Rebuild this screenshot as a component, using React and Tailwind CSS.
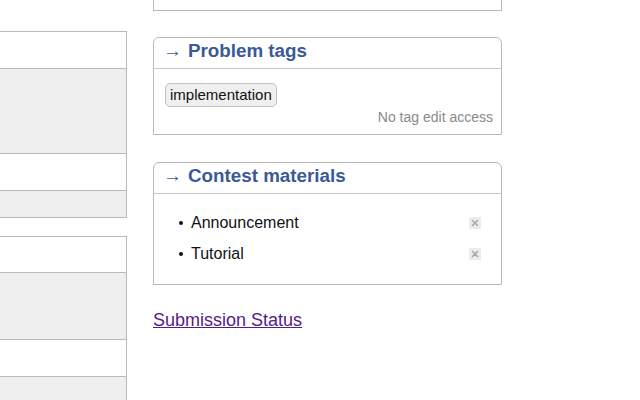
const tableRows = [
  { h: "h-[36px]", bg: "bg-white" },
  { h: "h-[85px]", bg: "bg-[#efefef]" },
  { h: "h-[37px]", bg: "bg-white" },
  { h: "h-[27px]", bg: "bg-[#efefef]" },
];

const tableRows2 = [
  { h: "h-[35px]", bg: "bg-white" },
  { h: "h-[67px]", bg: "bg-[#efefef]" },
  { h: "h-[37px]", bg: "bg-white" },
  { h: "h-[40px]", bg: "bg-[#efefef]" },
];

const Table = ({ rows }) => (
  <div className="border-t border-r border-b border-[#b9b9b9]">
    {rows.map((r, i) => (
      <div key={i} className={`${r.h} ${r.bg} ${i > 0 ? "border-t border-[#b9b9b9]" : ""}`} />
    ))}
  </div>
);

const BoxTitle = ({ children }) => (
  <div className="h-[31px] border-b border-[#c8c8c8] pl-[9px] pb-[4px] flex items-center">
    <span className="flex items-baseline">
      <span className="w-[25px] shrink-0 text-[#3b5998] text-[19px] leading-none">→</span>
      <span className="text-[#3b5998] text-[18.8px] font-bold leading-none">{children}</span>
    </span>
  </div>
);

const CloseIcon = () => (
  <span className="w-[12px] h-[12px] bg-[#ececec] flex items-center justify-center">
    <svg width="8" height="8" viewBox="0 0 8 8">
      <path d="M1 1L7 7M7 1L1 7" stroke="#a8a8a8" strokeWidth="1.5" />
    </svg>
  </span>
);

const App = () => {
  return (
    <div className="w-[640px] h-[400px] overflow-hidden bg-white flex font-['Liberation_Sans',Arial,sans-serif]">
      <div className="w-[127px] shrink-0 pt-[31px]">
        <Table rows={tableRows} />
        <div className="h-[18px]" />
        <Table rows={tableRows2} />
      </div>

      <div className="w-[349px] ml-[26px] shrink-0">
        <div className="h-[11px] border-x border-b border-[#b9b9b9]" />

        <div className="mt-[26px] h-[98px] border border-[#b9b9b9] rounded-t-[6px]">
          <BoxTitle>Problem tags</BoxTitle>
          <div className="px-[11px] pt-[14px]">
            <span className="inline-block h-[24px] leading-[21px] px-[4px] bg-[#efefef] border border-[#c2c2c2] rounded-[5px] text-[15px] text-[#111]">
              implementation
            </span>
            <div className="text-right text-[14px] text-[#8a8a8a] -mr-[3px] mt-[2px] leading-[16px]">No tag edit access</div>
          </div>
        </div>

        <div className="mt-[27px] h-[123px] border border-[#b9b9b9] rounded-t-[6px]">
          <BoxTitle>Contest materials</BoxTitle>
          <ul className="pt-[13px] pl-[25px] pr-[20px]">
            {["Announcement", "Tutorial"].map((t) => (
              <li key={t} className="h-[31px] flex items-center text-[16px] text-[#111]">
                <span className="w-[4px] h-[4px] rounded-full bg-[#111] mr-[8px]" />
                <span className="flex-1">{t}</span>
                <CloseIcon />
              </li>
            ))}
          </ul>
        </div>

        <div className="mt-[24px]">
          <a href="#" className="text-[18px] text-[#551a8b] underline leading-[21px]">Submission Status</a>
        </div>
      </div>
    </div>
  );
};

export default App;
